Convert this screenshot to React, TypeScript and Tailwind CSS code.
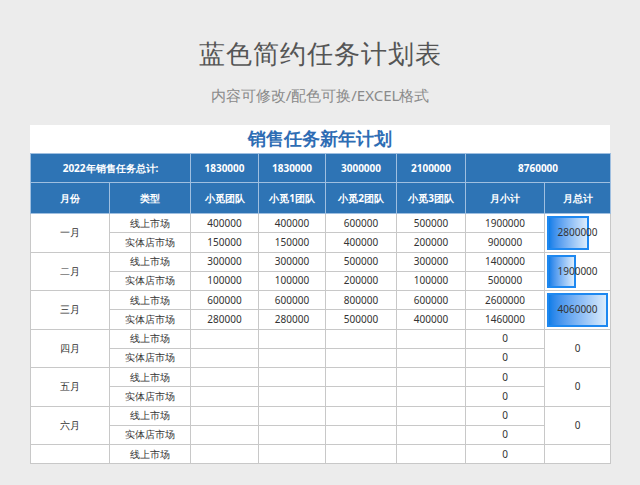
import React from "react";

const FONT = "font-['Noto_Sans_CJK_SC','Noto_Sans',sans-serif]";
const COLS = [79, 81, 68, 67, 71, 69, 79, 66];

type Row = { month: string; a: (string | number)[]; b: (string | number)[]; total: number };

const rows: Row[] = [
  { month: "一月", a: [400000, 400000, 600000, 500000, 1900000], b: [150000, 150000, 400000, 200000, 900000], total: 2800000 },
  { month: "二月", a: [300000, 300000, 500000, 300000, 1400000], b: [100000, 100000, 200000, 100000, 500000], total: 1900000 },
  { month: "三月", a: [600000, 600000, 800000, 600000, 2600000], b: [280000, 280000, 500000, 400000, 1460000], total: 4060000 },
  { month: "四月", a: ["", "", "", "", 0], b: ["", "", "", "", 0], total: 0 },
  { month: "五月", a: ["", "", "", "", 0], b: ["", "", "", "", 0], total: 0 },
  { month: "六月", a: ["", "", "", "", 0], b: ["", "", "", "", 0], total: 0 },
];

const td = "border border-[#c8c8c8] text-center text-[10px] text-[#333] p-0";
const th = "border border-[#9fbfe0] text-center text-[10px] font-bold text-white p-0";

export default function App() {
  return (
    <div className={`${FONT} w-[640px] h-[485px] overflow-hidden bg-[#ececec]`}>
      <div className="pt-[34px] text-center text-[26px] leading-[38px] tracking-[1px] text-[#555]">蓝色简约任务计划表</div>
      <div className="mt-[12px] text-center text-[15px] leading-[22px] text-[#8a8a8a]">内容可修改/配色可换/EXCEL格式</div>
      <div className="mx-[30px] mt-[19px] w-[580px] bg-white">
        <div className="h-[28px] text-center text-[18px] font-bold leading-[26px] text-[#2e6db4]">销售任务新年计划</div>
        <table className="w-[580px] table-fixed border-collapse">
          <colgroup>
            {COLS.map((w, i) => (
              <col key={i} style={{ width: w }} />
            ))}
          </colgroup>
          <tbody>
            <tr className="h-[29px] bg-[#2e74b5]">
              <td colSpan={2} className={th}>2022年销售任务总计:</td>
              <td className={th}>1830000</td>
              <td className={th}>1830000</td>
              <td className={th}>3000000</td>
              <td className={th}>2100000</td>
              <td colSpan={2} className={th}>8760000</td>
            </tr>
            <tr className="h-[31px] bg-[#2e74b5]">
              {["月份", "类型", "小觅团队", "小觅1团队", "小觅2团队", "小觅3团队", "月小计", "月总计"].map((t) => (
                <td key={t} className={th}>{t}</td>
              ))}
            </tr>
            {rows.map((r) => (
              <React.Fragment key={r.month}>
                <tr className="h-[19px]">
                  <td rowSpan={2} className={td}>{r.month}</td>
                  <td className={td}>线上市场</td>
                  {r.a.map((v, i) => (
                    <td key={i} className={td}>{v}</td>
                  ))}
                  <td rowSpan={2} className={`${td} relative`}>
                    {r.total > 0 && (
                      <div
                        className="absolute left-[2px] top-[2px] bottom-[2px] border-2 border-[#1e88f0] bg-gradient-to-r from-[#0a7ee8] to-[#dcecfb]"
                        style={{ width: `${(r.total / 4060000) * 61}px` }}
                      />
                    )}
                    <span className="relative">{r.total}</span>
                  </td>
                </tr>
                <tr className="h-[19.5px]">
                  <td className={td}>实体店市场</td>
                  {r.b.map((v, i) => (
                    <td key={i} className={td}>{v}</td>
                  ))}
                </tr>
              </React.Fragment>
            ))}
            <tr className="h-[19px]">
              <td className={td}></td>
              <td className={td}>线上市场</td>
              <td className={td}></td>
              <td className={td}></td>
              <td className={td}></td>
              <td className={td}></td>
              <td className={td}>0</td>
              <td className={td}></td>
            </tr>
          </tbody>
        </table>
      </div>
    </div>
  );
}
